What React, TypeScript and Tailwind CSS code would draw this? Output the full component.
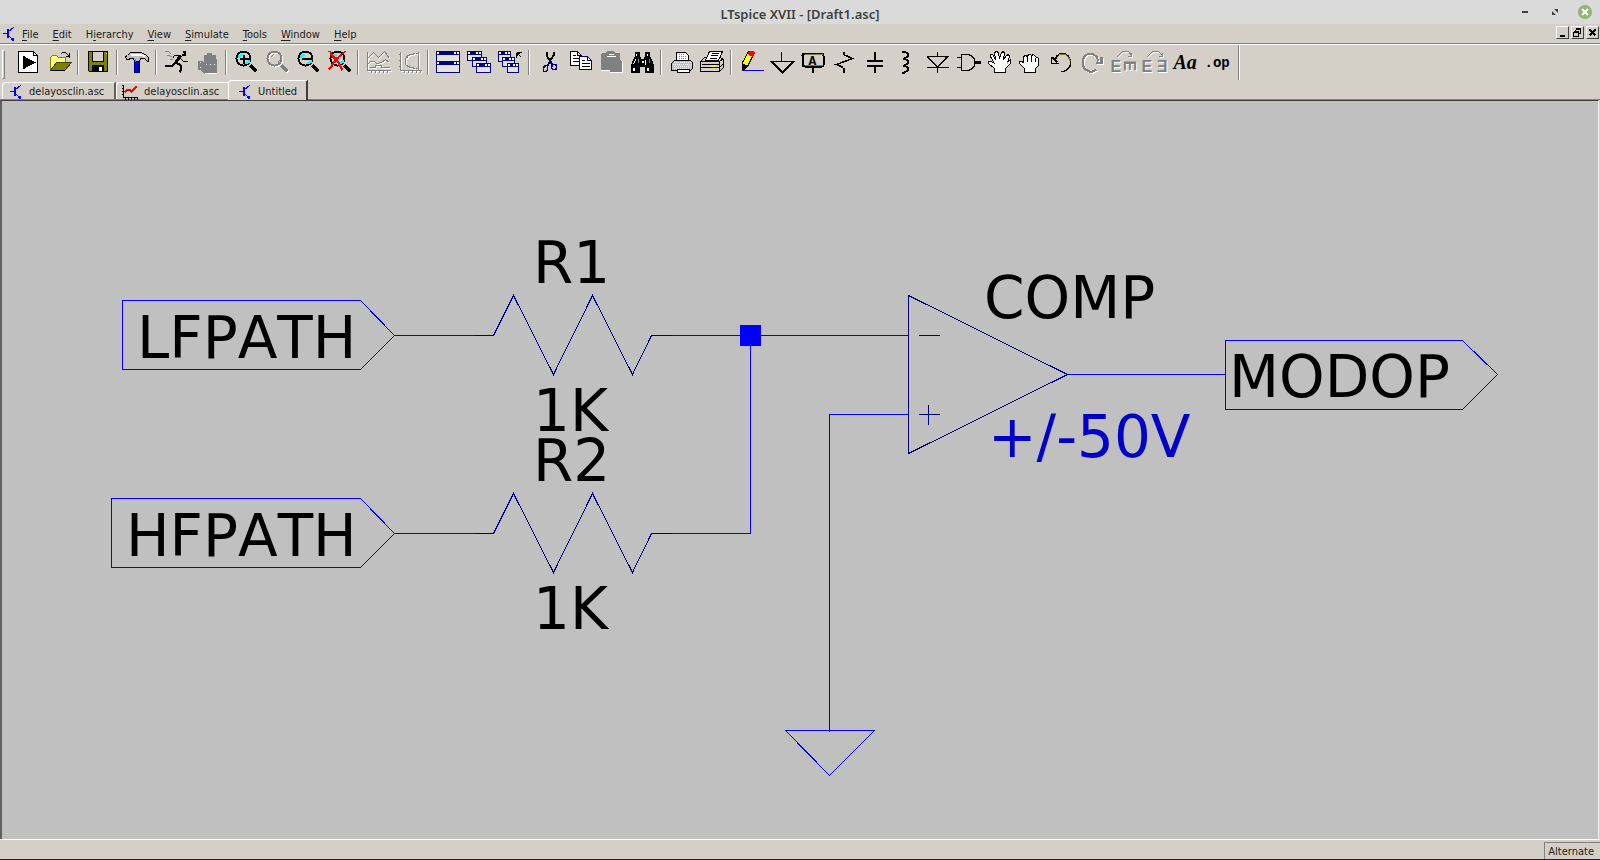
import React from 'react';

const BLUE = '#0000ff';
const NAVY = '#000080';
const GREY = '#808080';

type IconProps = { children: React.ReactNode };

// 24x24 toolbar bitmap, whole numbers are pixel centres
function Icon({ children }: IconProps) {
  return (
    <svg className="overflow-visible" width="24" height="24" viewBox="-0.5 -0.5 24 24" fill="none" stroke="#000" shapeRendering="crispEdges" aria-hidden="true">
      {children}
    </svg>
  );
}

// disabled look: white copy one pixel down-right under the grey one
function Etched({ children }: IconProps) {
  return (
    <>
      <g transform="translate(1 1)" stroke="#fff" fill="#fff">{children}</g>
      <g stroke={GREY} fill={GREY}>{children}</g>
    </>
  );
}

function Lens() {
  return (
    <>
      <path d="M16 15L22 21" strokeWidth="3" />
      <circle cx="9" cy="8" r="7" fill="#d4d0c8" strokeWidth="2" />
      <path d="M4 7V5H6M5 4H8M14 9V11H12M13 12H10" stroke="#00ffff" strokeWidth="2" />
    </>
  );
}

function MiniWindow({ x, y, w, h }: { x: number; y: number; w: number; h: number }) {
  return (
    <>
      <rect x={x} y={y} width={w} height={h} fill="#e4e2dc" stroke={NAVY} />
      <rect x={x} y={y} width={w} height="3" fill={NAVY} stroke={NAVY} />
      <g fill="#fff" stroke="none">
        <rect x={x + 0.5} y={y + 0.5} width="2" height="2" />
        <rect x={x + w - 5.5} y={y + 0.5} width="2" height="2" />
        <rect x={x + w - 2.5} y={y + 0.5} width="2" height="2" />
      </g>
    </>
  );
}

function Transistor() {
  return (
    <svg width="13" height="16" viewBox="-0.5 -0.5 13 16" fill="none" stroke={BLUE} shapeRendering="crispEdges" aria-hidden="true">
      <path d="M0 7H5M11 0V1L6 5" />
      <path d="M5 2V11" strokeWidth="2" />
      <path d="M6 9L11 14M8 13H11M10 11V14" />
      <path d="M8 13L11 11L12 15Z" fill={BLUE} stroke="none" />
    </svg>
  );
}

const icons: Record<string, React.ReactNode> = {
  run: (
    <>
      <path d="M2 1H17L21 5V22H2Z" fill="#fff" />
      <path d="M17 1V5H21" />
      <path d="M7 6L18 12L7 18Z" fill="#000" />
    </>
  ),
  open: (
    <>
      <path d="M3 20V7L5 5H9L11 7H18V12" fill="#ffff80" stroke="#808000" />
      <path d="M4 9H16M4 11H14M4 13H9" stroke="#fff" strokeDasharray="1 1" />
      <path d="M3 20L9 12H24L17 20Z" fill="#808000" stroke="#404000" />
      <path d="M3 20H17" />
      <path d="M13 4L15 2H18L22 6M22 2V7M18 6H22" />
    </>
  ),
  save: (
    <>
      <path d="M2 1H21V21H3L2 20Z" fill="#808000" />
      <path d="M6 1H17V11H6Z" fill="#d4d0c8" />
      <path d="M6 15H17V21H6Z" fill="#000" />
      <path d="M14 16V20" stroke="#fff" strokeWidth="3" />
      <path d="M19 3H20" stroke="#fff" />
    </>
  ),
  hammer: (
    <>
      <path d="M9 11H14V22H9Z" fill={BLUE} stroke={NAVY} />
      <path d="M13 12V22" stroke={NAVY} strokeWidth="2" />
      <path d="M0 6L2 5L5 2H15L20 4L23 7V11H22L19 8H15L14 11H9L8 8H5L3 9H1Z" fill="#c0c0c0" />
      <path d="M5 4H16L20 6" stroke="#fff" strokeWidth="2" />
      <path d="M10 8V11" stroke={GREY} />
    </>
  ),
  runner: (
    <>
      <path d="M0 1H4L7 4M2 5H5L8 7M5 9H8" stroke={GREY} />
      <path d="M18 1H20V4H17" strokeWidth="2" />
      <path d="M16 5L12 11" strokeWidth="3" />
      <path d="M14 5H10L8 8M16 8L19 11H23" />
      <path d="M12 11L8 15L1 16" strokeWidth="2" />
      <path d="M12 12L16 15V20L15 22" strokeWidth="2" />
    </>
  ),
  halt: (
    <>
      <path d="M8 23L4 19H2V11L6 10L8 12V5L11 4V2H16V4L20 5L21 8V23Z" fill={GREY} stroke="none" />
      <path d="M4 12H7M10 14H20M4 17H6" stroke="#fff" strokeDasharray="1 3" />
      <path d="M9 23H21" stroke="#fff" />
    </>
  ),
  zoomIn: (
    <>
      <Lens />
      <path d="M5 8H14M9 4V13" strokeWidth="2" />
    </>
  ),
  zoomBack: (
    <Etched>
      <path d="M16 15L22 21" strokeWidth="3" />
      <circle cx="9" cy="8" r="7" fill="none" strokeWidth="2" />
      <path d="M5 7L8 4M12 13L14 10" />
    </Etched>
  ),
  zoomOut: (
    <>
      <Lens />
      <path d="M5 8H14" strokeWidth="2" />
    </>
  ),
  zoomFit: (
    <>
      <g transform="translate(1 0)"><Lens /></g>
      <path d="M3 3L8 8L11 12L15 20M14 4L8 9L4 16L1 19M5 6L9 9M11 7L7 12" stroke="#ff0000" strokeWidth="2" />
      <path d="M0 1H3L5 5M19 0L14 4" stroke="#ff0000" />
    </>
  ),
  plot: (
    <Etched>
      <path fill="none" d="M1 1V20H24M1 8L7 2L12 7L18 1L23 8M1 14L4 11H8L10 13L15 12L19 9L23 12M3 17H9V15H15V17H23M5 20V22M9 20V22M13 20V22M17 20V22M21 20V22M0 4H1M0 10H1M0 16H1" />
    </Etched>
  ),
  fft: (
    <Etched>
      <path fill="none" d="M3 1V20H24M7 20V22M11 20V22M15 20V22M19 20V22M23 20V22M1 4H3M1 10H3M1 16H3M21 1V20M18 3H21M18 18H21M18 3L14 4L10 5L8 8V14L10 16L14 17L18 18M10 5V7M10 14V16" />
    </Etched>
  ),
  tile: (
    <>
      <MiniWindow x={0} y={1} w={23} h={10} />
      <MiniWindow x={0} y={11} w={23} h={11} />
    </>
  ),
  cascade: (
    <>
      <MiniWindow x={0} y={1} w={14} h={9} />
      <MiniWindow x={5} y={7} w={14} h={9} />
      <MiniWindow x={9} y={13} w={14} h={9} />
    </>
  ),
  closeAll: (
    <>
      <MiniWindow x={0} y={1} w={12} h={10} />
      <MiniWindow x={4} y={7} w={12} h={9} />
      <MiniWindow x={9} y={13} w={11} h={9} />
      <path d="M18 2H23M18 2V7M19 3L23 7" />
      <path d="M18 2H22L18 6Z" fill="#000" stroke="none" />
    </>
  ),
  cut: (
    <>
      <path d="M9 1V5L13 11V13M16 1V5L12 11V13" strokeWidth="2" />
      <path d="M12 12L10 15M13 12L15 14" stroke={NAVY} strokeWidth="2" />
      <path d="M8 15H10V19L9 21H6V17ZM15 14H18L19 15V18L18 19H15L14 17Z" stroke={NAVY} strokeWidth="1.6" />
    </>
  ),
  copy: (
    <>
      <path d="M2 1H9L13 5V15H2Z" fill="#fff" />
      <path d="M9 1V5H13M4 5H7M4 8H10M4 11H10" />
      <path d="M11 6H19L23 10V19H11Z" fill="#fff" stroke={NAVY} />
      <path d="M19 6V10H23" stroke={NAVY} />
      <path d="M13 10H16M13 13H21M13 16H21" />
    </>
  ),
  paste: (
    <>
      <path d="M3 3H6L8 1H14L16 3H20V9L23 11V22H11V20H2V5Z" fill="#fff" stroke="#fff" />
      <path d="M3 3H6L8 1H14L16 3H20V9L22 11V21H11V19H2V5Z" fill={GREY} stroke={GREY} />
      <path d="M7 6H16M9 4H14" stroke="#fff" />
    </>
  ),
  find: (
    <>
      <path d="M5 2H9V6L11 9H13L15 6V2H19V6L22 12L23 15V22H15V16H9V22H1V15L2 12L5 6Z" fill="#000" />
      <path d="M6 3V5M17 3V5M5 9L3 14M15 9V14" stroke="#fff" />
      <path d="M3 17V20M17 17V20M11 11H13" stroke="#fff" strokeWidth="2" />
      <path d="M8 8V12M19 8V12" stroke={GREY} />
    </>
  ),
  print: (
    <>
      <path d="M7 10V2H16L19 5V10" fill="#fff" />
      <path d="M9 4H15M9 6H17M9 8H17" stroke={GREY} strokeDasharray="1 1" />
      <path d="M2 13L5 10H21L23 12V18L21 20H2Z" fill="#c0c0c0" />
      <path d="M4 12H21M3 14H22M4 16H21M4 18H20" stroke="#fff" strokeDasharray="1 1" />
      <path d="M8 19H20V22H8Z" fill="#fff" />
    </>
  ),
  printSetup: (
    <>
      <path d="M0 11L4 7H20L23 9V17L19 21H0Z" fill="#d4d0c8" />
      <path d="M0 11H19L23 8M19 11V21M0 17H19L23 13M1 14H18" />
      <path d="M5 10L9 1H22L18 10Z" fill="#fff" />
      <path d="M11 3H18M10 5H17M9 8H16" />
      <path d="M10 15H15" stroke="#ffff00" strokeWidth="2" />
    </>
  ),
  wire: (
    <>
      <path d="M3 20H24" stroke={BLUE} />
      <path d="M9 1L14 4L8 16L3 19V12Z" fill="#ffff00" />
      <path d="M3 13L8 16L3 20Z" fill="#000" />
      <path d="M9 4L12 6" stroke={GREY} />
      <path d="M10 1H14L15 3L13 6L9 3Z" fill="#ff0000" stroke="#ff0000" />
      <path d="M7 12L10 6" stroke="#fff" />
    </>
  ),
  ground: <path d="M11 1V11M1 11H23L12 22Z" strokeWidth="1.6" />,
  label: (
    <>
      <rect x="1" y="3" width="21" height="13" rx="2" strokeWidth="2" />
      <path d="M3 4H21M3 15H21" stroke="#808040" />
      <path d="M11 17V22" strokeWidth="2" />
      <text x="11" y="14" textAnchor="middle" fill="#000" stroke="none" className="font-['Liberation_Mono'] text-[13px] font-bold">A</text>
    </>
  ),
  resistor: (
    <>
      <path d="M11 1V4M11 17V22" strokeWidth="2" />
      <path d="M11 4L20 8L4 14L11 17" strokeWidth="1.6" />
    </>
  ),
  capacitor: <path d="M11 1V9M11 16V22M3 10H19M3 15H19" strokeWidth="2" />,
  inductor: <path d="M7 1H10L13 3V6L10 8H8M10 8L13 10V13L10 15H8M10 15L13 17V20L10 22H7" strokeWidth="2" />,
  diode: <path d="M12 1V6M1 6H23M2 6L12 17L22 6M1 17H23M12 17V22" strokeWidth="1.6" />,
  gate: (
    <>
      <path d="M0 7H5M0 17H5M5 4H12L16 6L18 9V15L16 18L12 20H5Z" strokeWidth="1.6" />
      <path d="M18 12H24" strokeWidth="3" />
    </>
  ),
  move: (
    <>
      <path d="M7 22V18L1 13V11H4L7 13L3 6V4H5L8 9L7 2L9 1L11 2L12 8L14 2L16 1L17 3L16 9L19 5L21 4L22 6L20 12L23 9V13L18 18V22Z" fill="#fff" />
      <path d="M20 11V13" stroke="#00ffff" />
    </>
  ),
  drag: (
    <>
      <path d="M6 22V18L1 13V11H3L5 12V6L7 5L9 6L10 4H12L13 5L15 4L17 6L20 8V15L17 18V22Z" fill="#fff" />
      <path d="M9 6V11M13 5V11M17 7V11" />
    </>
  ),
  undo: (
    <>
      <path d="M5 11L7 6L11 3H15L19 6L21 10V15L18 19L14 21H11" strokeWidth="1.6" />
      <path d="M9 4H16L19 7L21 11" stroke="#808000" />
      <path d="M2 6V13H9M3 7L8 12" strokeWidth="1.6" />
    </>
  ),
  redo: (
    <Etched>
      <path fill="none" d="M18 11L16 6L12 3H8L4 6L2 10V15L5 19L9 21H12L16 19M21 6V12H15M20 6V12" strokeWidth="2" />
    </Etched>
  ),
  rotate: (
    <Etched>
      <path fill="none" d="M5 7L11 1H17L20 5M20 2V6H16" />
      <text x="-1" y="21" stroke="none" className="font-['Liberation_Sans'] text-[16px] font-bold">E</text>
      <text transform="translate(12 10) rotate(90)" stroke="none" className="font-['Liberation_Sans'] text-[16px] font-bold">E</text>
    </Etched>
  ),
  mirror: (
    <Etched>
      <path fill="none" d="M4 7L10 1H16L20 5M20 2V6H16" />
      <text x="-1" y="21" stroke="none" className="font-['Liberation_Sans'] text-[16px] font-bold">E</text>
      <text transform="translate(25 21) scale(-1 1)" stroke="none" className="font-['Liberation_Sans'] text-[16px] font-bold">E</text>
    </Etched>
  ),
  text: <text x="0" y="18" fill="#000" stroke="none" className="font-['Liberation_Serif'] text-[20px] font-bold italic">Aa</text>,
  op: <text x="0" y="16" fill="#000" stroke="none" className="font-['Liberation_Mono'] text-[14px] font-bold">.op</text>,
};

const toolGroups = [
  ['run', 'open'],
  ['save'],
  ['hammer'],
  ['runner', 'halt'],
  ['zoomIn', 'zoomBack', 'zoomOut', 'zoomFit'],
  ['plot', 'fft'],
  ['tile', 'cascade', 'closeAll'],
  ['cut', 'copy', 'paste', 'find'],
  ['print', 'printSetup'],
  ['wire', 'ground', 'label', 'resistor', 'capacitor', 'inductor', 'diode', 'gate', 'move', 'drag', 'undo', 'redo', 'rotate', 'mirror', 'text', 'op'],
];

// [before, underlined letter, after]
const menus = [
  ['', 'F', 'ile'],
  ['', 'E', 'dit'],
  ['H', 'i', 'erarchy'],
  ['', 'V', 'iew'],
  ['', 'S', 'imulate'],
  ['', 'T', 'ools'],
  ['', 'W', 'indow'],
  ['', 'H', 'elp'],
];

function Divider() {
  return <div className="mx-[3px] h-[25px] w-[2px] border-l border-r border-l-[#808080] border-r-white" />;
}

function PlotIcon() {
  return (
    <svg width="17" height="16" viewBox="-0.5 -0.5 17 16" fill="none" stroke="#000" shapeRendering="crispEdges" aria-hidden="true">
      <path d="M2 0V13H16M0 1H2M0 4H2M0 7H2M0 10H2M4 13V15M7 13V15M10 13V15M13 13V15M16 13V15" />
      <path d="M3 8L6 5H8L10 7L15 2" stroke="#ff0000" strokeWidth="2" />
    </svg>
  );
}

function MdiButton({ label, children }: { label: string; children: React.ReactNode }) {
  return (
    <button aria-label={label} className="h-[13px] w-[13px] border border-t-white border-r-[#404040] border-b-[#404040] border-l-white">
      <svg width="11" height="11" viewBox="-0.5 -0.5 11 11" fill="none" stroke="#000" shapeRendering="crispEdges">{children}</svg>
    </button>
  );
}

function Schematic() {
  return (
    <svg className="h-full w-full" viewBox="2 101 1596 738" fill="none" shapeRendering="crispEdges">
      <g transform="translate(.5 .5)" stroke={BLUE}>
        <path d="M122 300H360L394 335L360 369H122Z" />
        <path d="M111 498H360L394 533L360 567H111Z" />
        <path d="M1225 340H1462L1497 374L1462 409H1225Z" />
        <path d="M394 335H474M394 533H474M671 335H908M671 533H750V335M829 731V414H908M1067 374H1225" />
        <path d="M785 730H874L829 775Z" />
        <rect x="740" y="325" width="20" height="20" fill={BLUE} />
      </g>
      <g transform="translate(.5 .5)" stroke={NAVY}>
        <path d="M474 335H493L513 295L553 374L592 295L632 374L651 335H671" />
        <path d="M474 533H493L513 493L553 572L592 493L632 572L651 533H671" />
        <path d="M908 295V453L1067 374Z" />
        <path d="M918 335H939M918 414H939M928 404V424" />
      </g>
      <g fill="#000" className="font-['DejaVu_Sans',sans-serif] text-[58px] [font-kerning:none]">
        <text x="137" y="358">LFPATH</text>
        <text x="126" y="556">HFPATH</text>
        <text x="533" y="283">R1</text>
        <text x="533" y="431">1K</text>
        <text x="533" y="481">R2</text>
        <text x="533" y="629">1K</text>
        <text x="984" y="318">COMP</text>
        <text x="1229" y="397">MODOP</text>
        <text x="988" y="457" fill="#0000c8">+/-50V</text>
      </g>
    </svg>
  );
}

export default function App() {
  return (
    <div className="flex h-screen flex-col overflow-hidden border-b border-[#202020] bg-[#d4d0c8] font-['DejaVu_Sans_Condensed','DejaVu_Sans',sans-serif] text-[11px] leading-4 text-[#202020]">
      {/* Title bar */}
      <header className="grid h-6 shrink-0 grid-cols-[1fr_auto_1fr] items-center bg-[#dadada]">
        <span />
        <h1 className="pt-1 font-['Noto_Sans',sans-serif] text-[13px] font-semibold text-[#404040]">LTspice XVII - [Draft1.asc]</h1>
        <div className="flex items-center justify-end gap-4 pr-2">
          <button aria-label="Minimize" className="flex h-4 w-[14px] items-center justify-center">
            <span className="h-[2px] w-[6px] bg-[#404040]" />
          </button>
          <button aria-label="Maximize" className="flex h-4 w-[14px] items-center justify-center">
            <svg width="6" height="6" fill="#404040"><path d="M2 0H6V4ZM0 2V6H4Z" /></svg>
          </button>
          <button aria-label="Close" className="flex h-[14px] w-[14px] items-center justify-center rounded-full bg-[#92b372]">
            <svg width="8" height="8" stroke="#fff" strokeWidth="2"><path d="M1 1L7 7M7 1L1 7" /></svg>
          </button>
        </div>
      </header>

      {/* Menu bar */}
      <nav className="flex h-5 shrink-0 items-center border-b border-[#808080] pl-[2px]">
        <Transistor />
        <div className="flex flex-1 gap-[14px] pl-[7px] pt-[3px]">
          {menus.map(([pre, key, post]) => (
            <button key={pre + key + post}>
              {pre}<span className="underline underline-offset-2">{key}</span>{post}
            </button>
          ))}
        </div>
        <div className="flex gap-[2px] pr-px pb-[2px]">
          <MdiButton label="Minimize document"><path d="M2 8H7" strokeWidth="2" /></MdiButton>
          <MdiButton label="Restore document"><path d="M3 2H8V6H6M3 2V4M3 1H8M1 5H6V9H1ZM1 4H6" /></MdiButton>
          <MdiButton label="Close document"><path d="M2 2L8 8M8 2L2 8" strokeWidth="2" /></MdiButton>
        </div>
      </nav>

      {/* Toolbar */}
      <div className="flex h-9 shrink-0 items-start border-t border-white pt-[5px] pl-[2px]">
        <div className="mr-[7px] h-[29px] w-[3px] border border-t-white border-r-[#808080] border-b-[#808080] border-l-white" />
        {toolGroups.map((group, i) => (
          <React.Fragment key={i}>
            {i > 0 && <Divider />}
            {group.map((name) => (
              <button key={name} aria-label={name} className="flex w-[31px] justify-center">
                <Icon>{icons[name]}</Icon>
              </button>
            ))}
          </React.Fragment>
        ))}
        <div className="-mt-[5px] ml-[7px] h-[35px] w-[2px] border-l border-r border-l-[#808080] border-r-white" />
      </div>

      {/* Document tabs */}
      <div className="flex h-5 shrink-0 items-end border-b border-[#808080] pl-[2px]">
        <button className="flex h-[17px] w-[114px] items-center gap-[7px] rounded-tl-sm border-t border-r-2 border-l border-t-white border-r-[#606060] border-l-white pt-[2px] pl-[6px]">
          <Transistor />delayosclin.asc
        </button>
        <button className="flex h-[17px] w-[112px] items-center gap-[6px] rounded-tl-sm border-t border-l border-white pt-[2px] pl-1">
          <PlotIcon />delayosclin.asc
        </button>
        <button className="-mb-px flex h-5 w-[80px] items-center gap-[7px] rounded-tl-sm border-t border-r-2 border-l border-t-white border-r-[#404040] border-l-white bg-[#d4d0c8] pt-[2px] pl-[9px]">
          <Transistor />Untitled
        </button>
      </div>

      {/* Drawing area */}
      <main className="mr-px min-h-0 flex-1 border-t border-r border-l-2 border-t-[#404040] border-r-[#f0f0f0] border-l-[#606060] bg-[#c0c0c0]">
        <Schematic />
      </main>

      {/* Status bar */}
      <footer className="flex h-5 shrink-0 justify-end border-t border-white bg-[#d4d0c8]">
        <div className="mt-[2px] border-t border-l border-[#808080] pt-px pr-[6px] pl-[3px]">Alternate</div>
      </footer>
    </div>
  );
}
